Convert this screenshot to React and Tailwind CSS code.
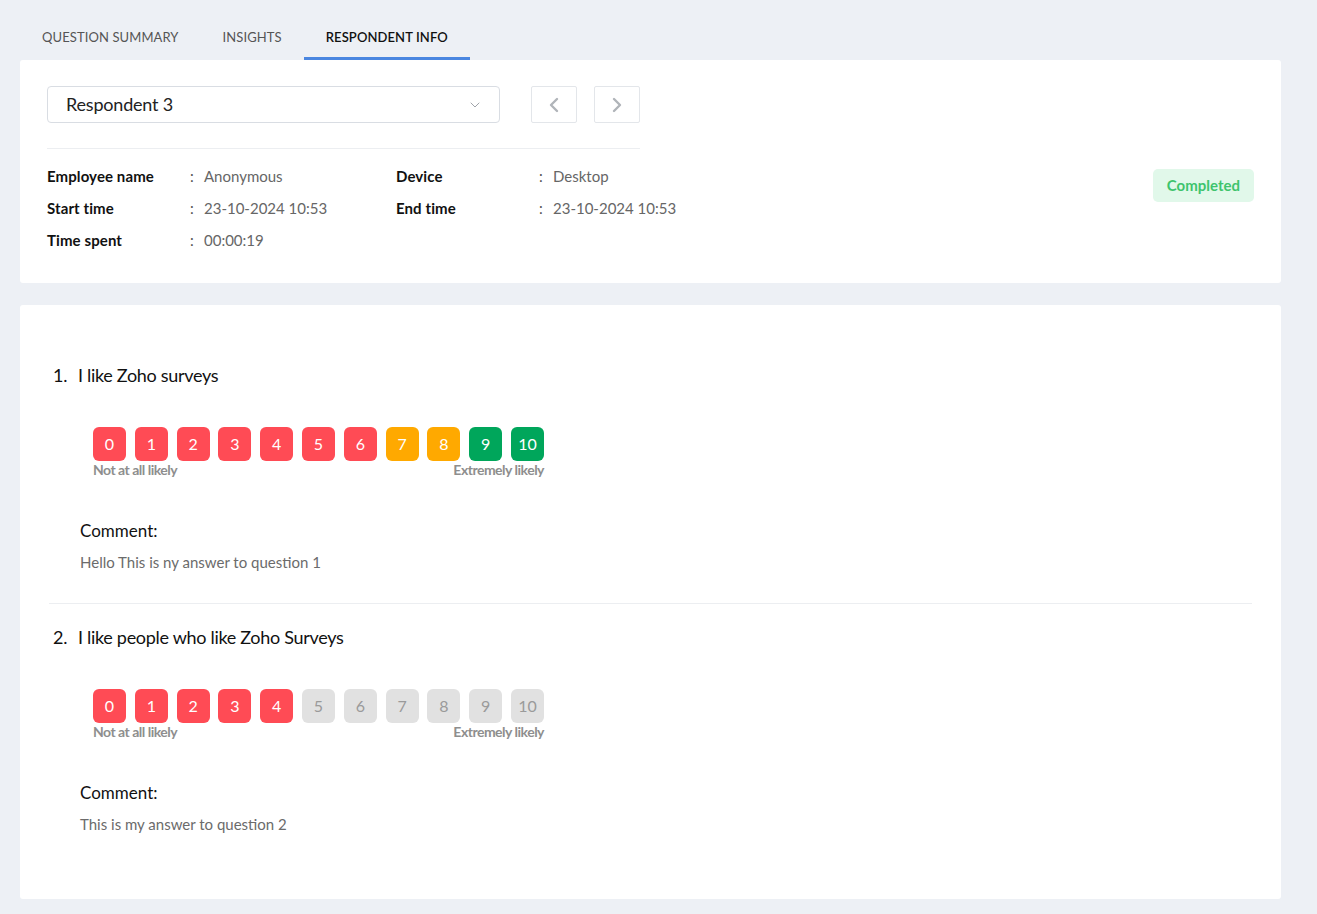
import React from 'react';
import { ChevronDown, ChevronLeft, ChevronRight } from 'lucide-react';

const tabs = ['QUESTION SUMMARY', 'INSIGHTS', 'RESPONDENT INFO'];

const infoLeft = [
  ['Employee name', 'Anonymous'],
  ['Start time', '23-10-2024 10:53'],
  ['Time spent', '00:00:19'],
];
const infoRight = [
  ['Device', 'Desktop'],
  ['End time', '23-10-2024 10:53'],
];

const questions = [
  { no: 1, text: 'I like Zoho surveys', answer: 10, comment: 'Hello This is ny answer to question 1' },
  { no: 2, text: 'I like people who like Zoho Surveys', answer: 4, comment: 'This is my answer to question 2' },
];

const boxColor = (n, answer) => {
  if (n > answer) return 'bg-[#e1e1e1] text-[#9a9a9a]';
  if (n <= 6) return 'bg-[#ff4b55] text-white';
  if (n <= 8) return 'bg-[#ffa900] text-white';
  return 'bg-[#00a65b] text-white';
};

const InfoRow = ({ label, value, labelW }) => (
  <div className="flex items-center h-8 text-[15px]">
    <span className={`font-bold text-[#111] tracking-[0.1px] ${labelW}`}>{label}</span>
    <span className="text-[#555] w-[14px]">:</span>
    <span className="text-[#666]">{value}</span>
  </div>
);

const Scale = ({ answer }) => (
  <div className="ml-[40px] w-[451px]">
    <div className="flex gap-[8.8px]">
      {Array.from({ length: 11 }, (_, n) => (
        <div
          key={n}
          className={`w-[33px] h-[34px] rounded-[6px] flex items-center justify-center text-[16px] ${boxColor(n, answer)}`}
        >
          {n}
        </div>
      ))}
    </div>
    <div className="flex justify-between text-[14px] font-bold text-[#8e8e8e] tracking-[-0.5px] leading-4 mt-[1px]">
      <span>Not at all likely</span>
      <span>Extremely likely</span>
    </div>
  </div>
);

const Question = ({ q }) => (
  <div className="px-[33px]">
    <div className="flex text-[18px] text-[#111] leading-6 tracking-[-0.3px]">
      <span className="w-[25px]">{q.no}.</span>
      <span>{q.text}</span>
    </div>
    <div className="mt-[40px]">
      <Scale answer={q.answer} />
    </div>
    <div className="ml-[27px] mt-[41px]">
      <div className="text-[17px] text-[#111] leading-6">Comment:</div>
      <div className="text-[15px] text-[#6b6b6b] mt-[9px] leading-5">{q.comment}</div>
    </div>
  </div>
);

export default function App() {
  return (
    <div className="min-h-screen bg-[#edf0f5] pl-5 pr-[36px] pt-[16px] pb-4" style={{ fontFamily: 'Lato, "Open Sans", sans-serif' }}>
      {/* tabs */}
      <div className="flex h-[44px]">
        {tabs.map((t, i) => (
          <div
            key={t}
            className={`px-[22px] flex items-center text-[13px] tracking-[0.1px] ${
              i === 2 ? 'text-[#111] font-semibold border-b-[3px] border-[#4a86e0] pt-[3px]' : 'text-[#555]'
            }`}
          >
            {t}
          </div>
        ))}
      </div>

      {/* respondent card */}
      <div className="bg-white rounded-[3px] px-[27px] pt-[26px] pb-[27px] flex justify-between">
        <div>
          <div className="flex items-center">
            <div className="w-[453px] h-[37px] border border-[#d9dde3] rounded-[4px] flex items-center justify-between pl-[18px] pr-[16px]">
              <span className="text-[18px] text-[#222] tracking-[-0.2px]">Respondent 3</span>
              <ChevronDown className="w-4 h-4 text-[#a0a4aa]" strokeWidth={1.5} />
            </div>
            <button className="ml-[31px] w-[46px] h-[37px] border border-[#e3e6ea] rounded-[2px] flex items-center justify-center">
              <ChevronLeft className="w-6 h-6 text-[#b0b4b9]" strokeWidth={2.4} />
            </button>
            <button className="ml-[17px] w-[46px] h-[37px] border border-[#e3e6ea] rounded-[2px] flex items-center justify-center">
              <ChevronRight className="w-6 h-6 text-[#b0b4b9]" strokeWidth={2.4} />
            </button>
          </div>
          <div className="w-[593px] border-t border-[#eceef1] mt-[25px]" />
          <div className="flex mt-[11px]">
            <div className="w-[349px]">
              {infoLeft.map(([l, v]) => (
                <InfoRow key={l} label={l} value={v} labelW="w-[143px]" />
              ))}
            </div>
            <div>
              {infoRight.map(([l, v]) => (
                <InfoRow key={l} label={l} value={v} labelW="w-[143px]" />
              ))}
            </div>
          </div>
        </div>
        <div className="pt-[83px]">
          <div className="bg-[#e1f8ea] text-[#3ec46d] font-bold text-[15px] rounded-[5px] h-[33px] px-[14px] flex items-center">
            Completed
          </div>
        </div>
      </div>

      {/* answers card */}
      <div className="bg-white rounded-[3px] mt-[22px] pt-[58px] pb-[65px]">
        <Question q={questions[0]} />
        <div className="mx-[29px] border-t border-[#eceef1] mt-[31px] mb-[21px]" />
        <Question q={questions[1]} />
      </div>
    </div>
  );
}
